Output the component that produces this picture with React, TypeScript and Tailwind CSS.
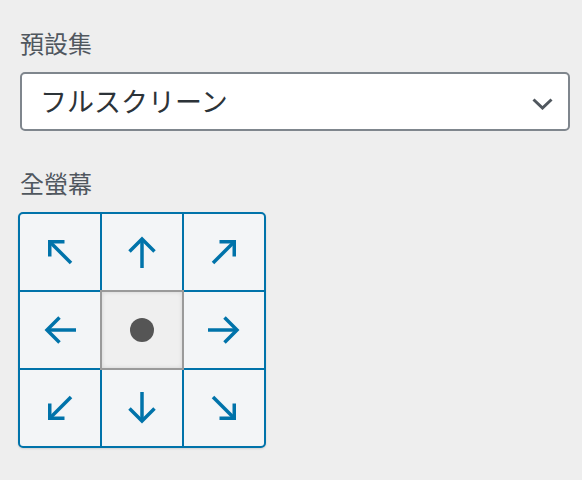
import React, { useState } from 'react';

type Cell = 'tl' | 't' | 'tr' | 'l' | 'c' | 'r' | 'bl' | 'b' | 'br';

const cells: Cell[] = ['tl', 't', 'tr', 'l', 'c', 'r', 'bl', 'b', 'br'];

// straight arrow points up, diagonal arrow points to top-left; both get rotated
const StraightArrow = ({ className }: { className?: string }) => (
  <svg width="32" height="32" viewBox="0 0 32 32" className={className} fill="none" stroke="#0073aa" strokeWidth="3.5">
    <path d="M16 3v29" />
    <path d="M3.5 15.5 16 3l12.5 12.5" strokeLinejoin="miter" />
  </svg>
);

const DiagonalArrow = ({ className }: { className?: string }) => (
  <svg width="32" height="32" viewBox="0 0 32 32" className={className} fill="none" stroke="#0073aa" strokeWidth="3.5">
    <path d="M5.75 20.5V5.75H20.5" strokeLinejoin="miter" />
    <path d="M5.75 5.75 27 27" />
  </svg>
);

const renderIcon = (cell: Cell) => {
  switch (cell) {
    case 'tl':
      return <DiagonalArrow />;
    case 'tr':
      return <DiagonalArrow className="rotate-90" />;
    case 'br':
      return <DiagonalArrow className="rotate-180" />;
    case 'bl':
      return <DiagonalArrow className="-rotate-90" />;
    case 't':
      return <StraightArrow />;
    case 'r':
      return <StraightArrow className="rotate-90" />;
    case 'b':
      return <StraightArrow className="rotate-180" />;
    case 'l':
      return <StraightArrow className="-rotate-90" />;
    default:
      return <div className="w-6 h-6 rounded-full bg-[#555555]" />;
  }
};

const App: React.FC = () => {
  const [preset, setPreset] = useState('fullscreen');
  const [selected, setSelected] = useState<Cell>('c');

  return (
    <div
      className="h-[480px] w-full bg-[#eeeeee] pt-[28px] text-[#50575e]"
      style={{ fontFamily: '"Noto Sans", "Noto Sans CJK TC", "Noto Sans CJK JP", sans-serif' }}
    >
      <label className="block ml-5 text-[24px] leading-[32px]">預設集</label>

      <div className="relative ml-5 mt-[12px] w-[550px]">
        <select
          value={preset}
          onChange={(e) => setPreset(e.target.value)}
          className="appearance-none w-full h-[59px] rounded-[5px] border-2 border-[#7f868d] bg-white pl-[18px] pr-12 text-[27px] text-[#2c3338] outline-none"
          style={{ fontFamily: '"Noto Sans CJK JP", sans-serif' }}
        >
          <option value="fullscreen">フルスクリーン</option>
          <option value="custom">カスタム</option>
        </select>
        <svg
          className="absolute right-[17px] top-[26px] pointer-events-none"
          width="21"
          height="12"
          viewBox="0 0 21 12"
          fill="none"
          stroke="#50575e"
          strokeWidth="3"
        >
          <path d="M1.5 1.5 10.5 10l9-8.5" />
        </svg>
      </div>

      <label className="block ml-5 mt-[37px] text-[24px] leading-[32px]">全螢幕</label>

      <div className="ml-[18px] mt-[12px] inline-grid grid-cols-[80px_80px_80px] grid-rows-[76px_76px_76px] gap-[2px] rounded-[5px] border-2 border-[#0073aa] bg-[#0073aa] overflow-hidden shadow-[0_1px_2px_rgba(0,0,0,0.12)]">
        {cells.map((cell) =>
          cell === selected ? (
            <button
              key={cell}
              onClick={() => setSelected(cell)}
              className="relative z-10 -m-[2px] flex items-center justify-center border-2 border-[#9a9a9a] bg-[#efefef] shadow-[inset_0_0_4px_rgba(0,0,0,0.12)]"
            >
              {renderIcon('c')}
            </button>
          ) : (
            <button
              key={cell}
              onClick={() => setSelected(cell)}
              className="flex items-center justify-center bg-[#f3f5f7]"
            >
              {renderIcon(cell)}
            </button>
          )
        )}
      </div>
    </div>
  );
};

export default App;
